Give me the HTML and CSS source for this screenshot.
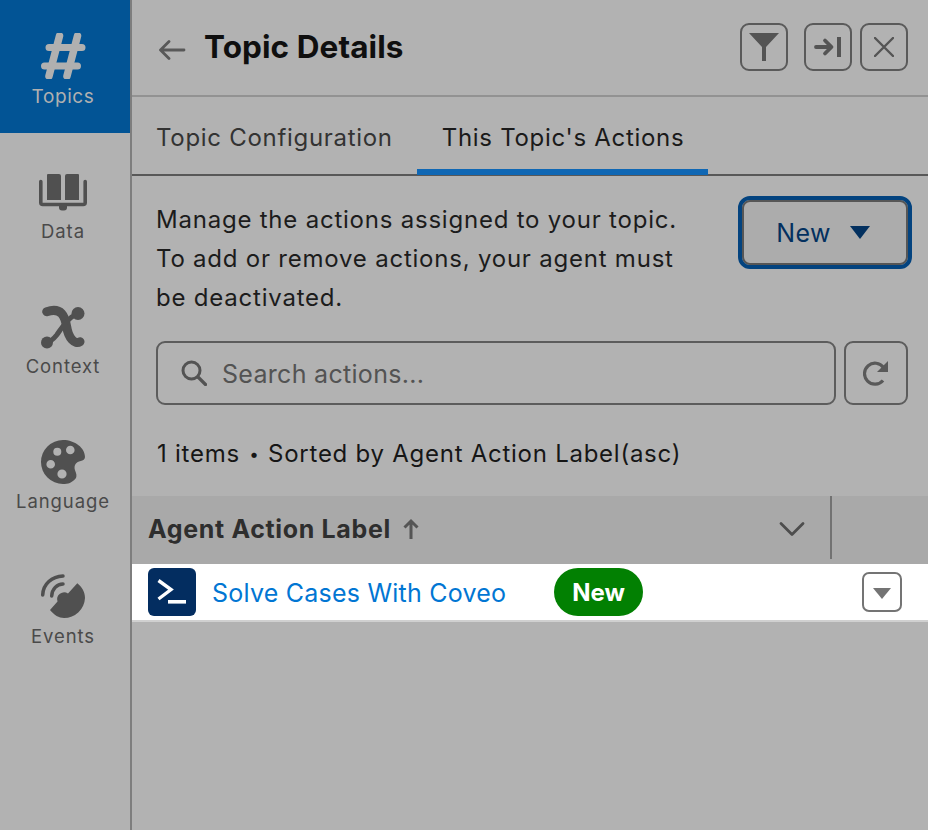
FILE: index.html
```html
<!DOCTYPE html>
<html lang="en">
<head>
  <meta charset="UTF-8" />
  <title>Topic Details</title>
  <link rel="stylesheet" href="styles.css">
</head>
<body>

  <!-- side navigation -->
  <nav class="sidebar">
    <div class="nav-item nav-active">
      <svg class="nav-icon" viewBox="0 0 48 46"><path fill="none" stroke="currentColor" stroke-width="7.500" stroke-linecap="round" d="M20.500 3 10 43M38.500 3 28 43"/><path fill="none" stroke="currentColor" stroke-width="7" stroke-linecap="round" d="M10 14.500h33M5.500 33h33"/></svg>
      <span>Topics</span>
    </div>
    <div class="nav-item">
      <svg class="nav-icon" viewBox="0 0 48 46"><path fill="currentColor" d="M9 5h11a2 2 0 0 1 2 2v24H8V6a1 1 0 0 1 1-1zM28 5h11a1 1 0 0 1 1 1v25H26V7a2 2 0 0 1 2-2z"/><path fill="none" stroke="currentColor" stroke-width="3.600" stroke-linecap="round" d="M1.800 12.500v21a2 2 0 0 0 2 2h40.400a2 2 0 0 0 2-2v-21"/><rect x="20" y="34" width="8" height="7.500" rx="3" fill="currentColor"/></svg>
      <span>Data</span>
    </div>
    <div class="nav-item">
      <svg class="nav-icon" viewBox="0 0 48 46"><path fill="none" stroke="currentColor" stroke-width="9" stroke-linecap="round" d="M7.700 7.700C22.700 2.700 26 12.700 27.700 22.700 29.300 34.300 36 41 41 37.700"/><path fill="none" stroke="currentColor" stroke-width="5" stroke-linecap="round" d="M39.300 9.300C27.700 14.300 22.700 24.300 17.700 31 14.300 35.300 11 37.700 7.700 38.300"/><circle cx="39" cy="9.500" r="6.500" fill="currentColor"/><circle cx="8" cy="38.500" r="6" fill="currentColor"/></svg>
      <span>Context</span>
    </div>
    <div class="nav-item">
      <svg class="nav-icon" viewBox="0 0 48 46"><path fill="currentColor" fill-rule="evenodd" d="M24 1C36 1 46 9 46 18 46 23 38 21 36 26 34 31 39 34 37 39 33 44 29 45 24 45A22 22 0 0 1 24 1zM18.300 8.700a4 4 0 1 0 0 8 4 4 0 0 0 0-8zM31.300 6.700a4.300 4.300 0 1 0 0 8.600 4.300 4.300 0 0 0 0-8.600zM11.700 21a4.300 4.300 0 1 0 0 8.600 4.300 4.300 0 0 0 0-8.600zM23 30.400a4.600 4.600 0 1 0 0 9.200 4.600 4.600 0 0 0 0-9.200z"/></svg>
      <span>Language</span>
    </div>
    <div class="nav-item">
      <svg class="nav-icon" viewBox="0 0 48 46"><path fill="currentColor" d="M38.300 9.300C43 13 46 18 46 24A21 21 0 0 1 25 44C20 44 15 41 11 36L18.500 27.500A7 7 0 0 1 29 19.500z"/><path fill="none" stroke="currentColor" stroke-width="3.500" stroke-linecap="round" d="M3.700 21C4 10 13 2.500 24 2M12.700 22C13 15 18 10 24 10"/></svg>
      <span>Events</span>
    </div>
  </nav>

  <main class="panel">
    <header class="panel-header">
      <svg class="back-icon" viewBox="0 0 28 20"><path fill="none" stroke="currentColor" stroke-width="2.800" stroke-linecap="round" stroke-linejoin="round" d="M3 10h23M11 1.500 2.500 10l8.500 8.500"/></svg>
      <h1>Topic Details</h1>
      <button class="icon-btn btn-filter">
        <svg viewBox="0 0 30 30" width="30" height="30"><path fill="currentColor" d="M0 1h30L17 15v14h-4V15z"/></svg>
      </button>
      <button class="icon-btn btn-collapse">
        <svg viewBox="0 0 28 20" width="28" height="20"><path fill="none" stroke="currentColor" stroke-width="3.800" stroke-linecap="round" stroke-linejoin="round" d="M2 10h15M11 3.500l6.500 6.500-6.500 6.500"/><rect x="23" y="0" width="4" height="20" fill="currentColor"/></svg>
      </button>
      <button class="icon-btn btn-close">
        <svg viewBox="0 0 20 20" width="20" height="20"><path fill="none" stroke="currentColor" stroke-width="2.400" stroke-linecap="round" d="M1 1l18 18M19 1 1 19"/></svg>
      </button>
    </header>

    <div class="tabs">
      <div class="tab">Topic Configuration</div>
      <div class="tab tab-active">This Topic's Actions</div>
    </div>

    <section class="intro">
      <p>Manage the actions assigned to your topic.<br>To add or remove actions, your agent must<br>be deactivated.</p>
      <button class="new-btn">New <span class="caret"></span></button>
    </section>

    <div class="search-row">
      <div class="search-box">
        <svg class="search-icon" viewBox="0 0 26 26"><circle cx="10.500" cy="10.500" r="8.500" fill="none" stroke="currentColor" stroke-width="3"/><path stroke="currentColor" stroke-width="3.200" stroke-linecap="round" d="M17 17l7.500 7.500"/></svg>
        <span>Search actions...</span>
      </div>
      <button class="refresh-btn">
        <svg viewBox="0 0 26 26" width="26" height="26"><path fill="none" stroke="currentColor" stroke-width="3.200" d="M20.500 7.500A10.500 10.500 0 1 0 20 20.500"/><path fill="currentColor" d="M25 1v11H14z"/></svg>
      </button>
    </div>

    <p class="summary">1 items <span class="dot">•</span> Sorted by Agent Action Label(asc)</p>

    <div class="table-head">
      <div class="th-label">
        <span>Agent Action Label</span>
        <svg class="sort-icon" viewBox="0 0 16 22" width="16" height="22"><path fill="none" stroke="currentColor" stroke-width="3" d="M8 21V3M1.500 9.500 8 3l6.500 6.500"/></svg>
        <svg class="chevron" viewBox="0 0 26 16" width="26" height="16"><path fill="none" stroke="currentColor" stroke-width="2.800" stroke-linecap="round" stroke-linejoin="round" d="M2 2.500 13 13.500 24 2.500"/></svg>
      </div>
      <div class="th-rest"></div>
    </div>

    <div class="table-row">
      <div class="action-icon">
        <svg viewBox="0 0 48 48" width="48" height="48"><path fill="none" stroke="#fff" stroke-width="3.400" d="M10.500 12.500 23 21.500l-12.500 9.500"/><rect x="20" y="32" width="18" height="3.600" fill="#fff"/></svg>
      </div>
      <a class="action-link">Solve Cases With Coveo</a>
      <span class="badge">New</span>
      <button class="row-menu"><span class="row-caret"></span></button>
    </div>
  </main>

</body>
</html>
```

FILE: styles.css
```css
* {
  box-sizing: border-box;
}

body, html {
  height: 100%;
  margin: 0;
  font-family: Inter, "Noto Sans", sans-serif;
  background-color: #b2b2b2;
  overflow: hidden;
}

body {
  display: flex;
}

button {
  font-family: inherit;
  background: transparent;
  padding: 0;
}

/* side navigation */
.sidebar {
  width: 132px;
  flex: none;
  height: 830px;
  border-right: 2px solid #7e7e7e;
}

.nav-item {
  height: 135px;
  display: flex;
  flex-direction: column;
  align-items: center;
  font-size: 18.500px;
  line-height: 22px;
  letter-spacing: 0.9px;
  padding: 36px 4px 0 0;
  color: #4a4a4a;
}

.nav-active {
  height: 133px;
  padding: 33px 4px 0 0;
  background-color: #025495;
  color: #b0b0b0;
  font-size: 19px;
  letter-spacing: 0.6px;
}

.nav-icon {
  width: 48px;
  height: 46px;
  margin-bottom: 5px;
  color: #505050;
}

.nav-active .nav-icon {
  color: #b0b0b0;
  margin-bottom: 7px;
}

/* right panel */
.panel {
  flex: 1;
  min-width: 0;
}

.panel-header {
  height: 97px;
  border-bottom: 2px solid #929292;
  display: flex;
  align-items: center;
  padding: 0 20px 2px 26px;
}

.back-icon {
  width: 28px;
  height: 20px;
  color: #585858;
  margin: 6px 18px 0 0;
}

.panel-header h1 {
  margin: 0;
  font-size: 31.500px;
  font-weight: 700;
  letter-spacing: 0.08px;
  color: #0f0f0f;
  flex: 1;
}

.icon-btn {
  height: 48px;
  width: 48px;
  border: 2px solid #5a5a5a;
  border-radius: 9px;
  color: #545454;
  display: flex;
  align-items: center;
  justify-content: center;
}

.btn-filter {
  margin-right: 16px;
}

.btn-collapse {
  margin-right: 8px;
}

.tabs {
  height: 79px;
  border-bottom: 2px solid #585858;
  display: flex;
  padding-left: 24px;
  font-size: 24px;
  letter-spacing: 0.7px;
  color: #333;
}

.tab {
  padding-top: 26px;
  margin-right: 24px;
}

.tab-active {
  padding: 26px 24px 0 25px;
  height: 78px;
  border-bottom: 6px solid #0f67b4;
  color: #1a1a1a;
}

.intro {
  display: flex;
  justify-content: space-between;
  padding: 24px 20px 0 24px;
  height: 165px;
}

.intro p {
  margin: 0;
  font-size: 24px;
  line-height: 39px;
  letter-spacing: 0.78px;
  color: #1c1c1c;
  white-space: nowrap;
}

.new-btn {
  width: 166px;
  height: 65px;
  flex: none;
  border: 2px solid #565656;
  border-radius: 8px;
  outline: 4px solid #03437f;
  outline-offset: 0;
  background-color: #acacac;
  color: #03305f;
  font-size: 25px;
  letter-spacing: 0.3px;
  display: flex;
  align-items: center;
  justify-content: center;
  gap: 19px;
  padding-right: 4px;
}

.caret {
  width: 0;
  height: 0;
  border-left: 10px solid transparent;
  border-right: 10px solid transparent;
  border-top: 13px solid #03305f;
}

.search-row {
  display: flex;
  gap: 8px;
  padding: 0 20px 0 24px;
}

.search-box {
  flex: 1;
  height: 64px;
  border: 2px solid #5c5c5c;
  border-radius: 9px;
  display: flex;
  align-items: center;
  padding-left: 23px;
  font-size: 25px;
  letter-spacing: 0.3px;
  color: #535353;
  gap: 15px;
}

.search-box span {
  padding-top: 2px;
}

.search-icon {
  width: 26px;
  height: 26px;
}

.refresh-btn {
  width: 64px;
  height: 64px;
  border: 2px solid #5c5c5c;
  border-radius: 9px;
  color: #595959;
  display: flex;
  align-items: center;
  justify-content: center;
}

.summary {
  margin: 0;
  padding: 34px 0 0 25px;
  height: 91px;
  font-size: 24px;
  line-height: 30px;
  letter-spacing: 0.74px;
  color: #161616;
}

.dot {
  font-size: 17px;
  padding: 0 1px 0 2px;
  vertical-align: 2px;
}

.table-head {
  height: 68px;
  background-color: #a9a9a9;
  display: flex;
}

.th-label {
  width: 700px;
  height: 63px;
  border-right: 2px solid #727272;
  display: flex;
  align-items: center;
  padding: 3px 25px 0 16px;
  font-size: 25px;
  font-weight: 700;
  letter-spacing: 0.66px;
  color: #2e2e2e;
}

.sort-icon {
  color: #555;
  margin-left: 12px;
}

.chevron {
  margin-left: auto;
  color: #4d4d4d;
}

.table-row {
  height: 58px;
  background-color: #fff;
  border-bottom: 2px solid #d0d0d0;
  display: flex;
  align-items: center;
  padding: 0 26px 0 16px;
}

.action-icon {
  width: 48px;
  height: 48px;
  background-color: #032d60;
  border-radius: 6px;
  margin-right: 16px;
}

.action-link {
  font-size: 25px;
  letter-spacing: 0.23px;
  color: #0176d3;
  width: 342px;
  padding-top: 2px;
}

.badge {
  width: 89px;
  height: 48px;
  border-radius: 24px;
  background-color: #028002;
  color: #fff;
  font-size: 24px;
  font-weight: 700;
  display: flex;
  align-items: center;
  justify-content: center;
}

.row-menu {
  margin-left: auto;
  width: 40px;
  height: 40px;
  border: 2px solid #747474;
  border-radius: 7px;
  display: flex;
  align-items: center;
  justify-content: center;
}

.row-caret {
  width: 0;
  height: 0;
  margin-top: 3px;
  border-left: 9px solid transparent;
  border-right: 9px solid transparent;
  border-top: 11px solid #747474;
}
```
